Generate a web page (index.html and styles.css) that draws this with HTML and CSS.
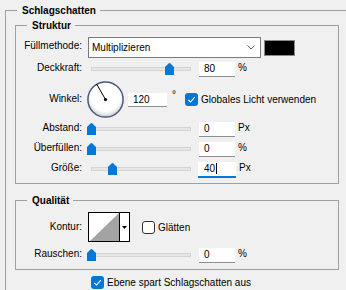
FILE: index.html
```html
<!DOCTYPE html>
<html lang="de">
<head>
<meta charset="utf-8">
<title>Schlagschatten</title>
<link rel="stylesheet" href="styles.css">
</head>
<body>
<fieldset class="group outer">
  <legend class="title">Schlagschatten</legend>

  <fieldset class="group section struktur">
    <legend class="title">Struktur</legend>
    <div class="rows">
      <div class="row r-blend">
        <span class="label">Füllmethode:</span>
        <div class="select">
          <span>Multiplizieren</span>
          <svg class="chev" width="8" height="5" viewBox="0 0 8 5"><polyline points="0.5,0.5 4,4 7.5,0.5" fill="none" stroke="#5a5a5a" stroke-width="1"/></svg>
        </div>
        <span class="swatch"></span>
      </div>

      <div class="row r-field">
        <span class="label">Deckkraft:</span>
        <div class="slider"><div class="track"></div><svg class="thumb" style="left:78px" width="9" height="12" viewBox="0 0 9 12"><path d="M0 4 L3.6 0.5 Q4.5 -0.3 5.4 0.5 L9 4 V12 H0 Z" fill="#0078d7"/></svg></div>
        <span class="field">80</span><span class="unit">%</span>
      </div>

      <div class="row r-angle">
        <span class="label label-angle">Winkel:</span>
        <svg class="dial" width="37" height="37" viewBox="0 0 37 37">
          <defs>
            <radialGradient id="dg" cx="50%" cy="42%" r="58%">
              <stop offset="0.72" stop-color="#ffffff"/>
              <stop offset="1" stop-color="#c9ccd2"/>
            </radialGradient>
          </defs>
          <circle cx="18.5" cy="18.5" r="17.6" fill="url(#dg)" stroke="#4d5b7a" stroke-width="1.5"/>
          <line x1="18.5" y1="18.5" x2="9.6" y2="3" stroke="#000" stroke-width="1"/>
          <circle cx="18.5" cy="18.5" r="1.6" fill="#000"/>
        </svg>
        <span class="field field-angle">120</span><span class="deg">°</span>
        <label class="check check-global">
          <svg class="box" width="13" height="13" viewBox="0 0 13 13"><rect x="0" y="0" width="13" height="13" rx="3" fill="#0078d7"/><path d="M3.2 6.8 L5.5 9 L9.8 4.2" fill="none" stroke="#ffffff" stroke-width="1.1"/></svg>
          <span>Globales Licht verwenden</span>
        </label>
      </div>

      <div class="row r-field">
        <span class="label">Abstand:</span>
        <div class="slider"><div class="track"></div><svg class="thumb" style="left:0px" width="9" height="12" viewBox="0 0 9 12"><path d="M0 4 L3.6 0.5 Q4.5 -0.3 5.4 0.5 L9 4 V12 H0 Z" fill="#0078d7"/></svg></div>
        <span class="field">0</span><span class="unit">Px</span>
      </div>

      <div class="row r-field loose">
        <span class="label">Überfüllen:</span>
        <div class="slider"><div class="track"></div><svg class="thumb" style="left:0px" width="9" height="12" viewBox="0 0 9 12"><path d="M0 4 L3.6 0.5 Q4.5 -0.3 5.4 0.5 L9 4 V12 H0 Z" fill="#0078d7"/></svg></div>
        <span class="field">0</span><span class="unit">%</span>
      </div>

      <div class="row r-field loose">
        <span class="label">Größe:</span>
        <div class="slider"><div class="track"></div><svg class="thumb" style="left:21px" width="9" height="12" viewBox="0 0 9 12"><path d="M0 4 L3.6 0.5 Q4.5 -0.3 5.4 0.5 L9 4 V12 H0 Z" fill="#0078d7"/></svg></div>
        <span class="field focus">40<span class="caret"></span></span><span class="unit">Px</span>
      </div>
    </div>
  </fieldset>

  <fieldset class="group section qualitaet">
    <legend class="title">Qualität</legend>
    <div class="rows rows-q">
      <div class="row r-contour">
        <span class="label label-contour">Kontur:</span>
        <div class="contour">
          <svg class="contour-swatch" width="30" height="28" viewBox="0 0 30 28"><rect width="30" height="28" fill="#fff"/><polygon points="1,28 30,0 30,28" fill="#a3a3a3"/></svg>
          <span class="contour-arrow"><svg width="5" height="3" viewBox="0 0 5 3"><polygon points="0,0 5,0 2.5,3" fill="#000"/></svg></span>
        </div>
        <label class="check check-smooth">
          <span class="box box-empty"></span>
          <span>Glätten</span>
        </label>
      </div>

      <div class="row r-field">
        <span class="label">Rauschen:</span>
        <div class="slider"><div class="track"></div><svg class="thumb" style="left:0px" width="9" height="12" viewBox="0 0 9 12"><path d="M0 4 L3.6 0.5 Q4.5 -0.3 5.4 0.5 L9 4 V12 H0 Z" fill="#0078d7"/></svg></div>
        <span class="field">0</span><span class="unit">%</span>
      </div>
    </div>
  </fieldset>

  <label class="check bottom-check">
    <svg class="box" width="13" height="13" viewBox="0 0 13 13"><rect x="0" y="0" width="13" height="13" rx="3" fill="#0078d7"/><path d="M3.2 6.8 L5.5 9 L9.8 4.2" fill="none" stroke="#ffffff" stroke-width="1.1"/></svg>
    <span>Ebene spart Schlagschatten aus</span>
  </label>
</fieldset>
</body>
</html>
```

FILE: styles.css
```css
* { box-sizing: border-box; }

html, body {
  margin: 0;
  padding: 0;
  overflow: hidden;
}

body {
  width: 346px;
  height: 290px;
  background: #f0f0f0;
  font-family: "Liberation Sans", Arial, sans-serif;
  font-size: 10px;
  color: #000;
}

.group {
  border: 1px solid #a0a0a0;
  margin: 0;
  padding: 0;
  min-width: 0;
}

.title {
  font-weight: bold;
  font-size: 10px;
  line-height: 13px;
  height: 13px;
  padding: 0 4px 0 5px;
  margin-left: 11px;
}

/* outer group runs off the right and bottom edge of the window */
.outer {
  margin: 4px 0 0 5px;
  width: 341px;
  height: 286px;
  border-right: 0;
  border-bottom: 0;
  padding: 0;
}

.section {
  margin-left: 9px;
  width: 324px;
  padding: 5px 0 6px 0;
}

.struktur { margin-top: 2px; }
.qualitaet { margin-top: 10px; }

.rows {
  display: flex;
  flex-direction: column;
  gap: 4px;
}

.rows-q { gap: 6px; }

.row {
  display: flex;
  align-items: center;
}

.loose { margin-top: 1px; }

.r-blend { height: 21px; }
.r-field { height: 15px; }
.r-angle { height: 37px; }
.r-contour { height: 30px; }

.label {
  width: 66px;
  flex: none;
  text-align: right;
  white-space: nowrap;
  margin-bottom: 4px;
}

.label-angle, .label-contour { margin-bottom: 2px; }

.select {
  margin-left: 6px;
  width: 173px;
  height: 21px;
  flex: none;
  background: #fff;
  border: 1px solid #7a7a7a;
  display: flex;
  align-items: center;
  justify-content: space-between;
  padding: 0 5px 0 3px;
}

.swatch {
  margin-left: 3px;
  width: 31px;
  height: 16px;
  background: #000;
  border: 1px solid #8a8a8a;
  flex: none;
}

.slider {
  position: relative;
  margin-left: 5px;
  width: 108px;
  height: 15px;
  flex: none;
  padding: 5px 4px 0 4px;
}

.track {
  height: 4px;
  background: #e6e6e6;
  border: 1px solid #d4d4d4;
}

.thumb {
  position: absolute;
  top: 1px;
  display: block;
}

.field {
  margin-left: 4px;
  width: 36px;
  height: 15px;
  flex: none;
  background: #fff;
  border-bottom: 1px solid #8f8f8f;
  padding-left: 5px;
  line-height: 14px;
  white-space: nowrap;
}

.field.focus {
  margin-left: 3px;
  width: 38px;
  height: 16px;
  margin-top: 1px;
  padding-left: 6px;
  border-bottom: 2px solid #0078d7;
}

.caret {
  display: inline-block;
  width: 1px;
  height: 11px;
  background: #000;
  vertical-align: -2px;
  margin-left: 1px;
}

.unit {
  margin-left: 3px;
  align-self: flex-start;
  line-height: 11px;
}

.dial {
  margin-left: 5px;
  flex: none;
  display: block;
}

.field-angle {
  width: 39px;
  height: 14px;
}

.deg {
  margin-left: 5px;
  align-self: flex-start;
  margin-top: 9px;
  line-height: 10px;
}

.check {
  display: flex;
  align-items: center;
  gap: 3px;
  white-space: nowrap;
}

.box {
  display: block;
  width: 13px;
  height: 13px;
  flex: none;
}

.box-empty {
  background: #fff;
  border: 1px solid #333;
  border-radius: 3px;
}

.check-global { margin-left: 9px; }

.contour {
  margin-left: 6px;
  width: 42px;
  height: 30px;
  flex: none;
  border: 1px solid #000;
  background: #fff;
  display: flex;
}

.contour-swatch {
  display: block;
  flex: none;
}

.contour-arrow {
  flex: 1;
  border-left: 1px solid #000;
  display: flex;
  align-items: center;
  justify-content: center;
}

.contour-arrow svg { display: block; }

.check-smooth { margin-left: 12px; }

.bottom-check {
  margin: 6px 0 0 85px;
  width: max-content;
}
```
